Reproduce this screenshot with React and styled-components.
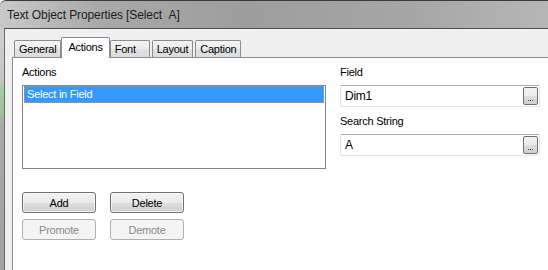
import styled, { createGlobalStyle, css } from 'styled-components';

const GlobalStyle = createGlobalStyle`
  html, body {
    margin: 0;
    padding: 0;
    width: 548px;
    height: 270px;
    overflow: hidden;
    background: #f0f0f0;
  }
  body {
    font-family: "Liberation Sans", Arial, sans-serif;
    font-size: 11px;
    letter-spacing: -0.25px;
    color: #000;
  }
`;

const Window = styled.div`
  width: 548px;
  height: 270px;
  display: flex;
  flex-direction: column;
  overflow: hidden;
`;

const TitleBar = styled.div`
  height: 27px;
  border-top: 1px solid #3a3a3a;
  border-top-left-radius: 6px;
  background: linear-gradient(90deg, #c9c9c9 0%, #a9a9a9 18%, #9d9d9d 45%, #a6a6a6 75%, #b6b6b6 100%);
  display: flex;
  align-items: center;
  padding-left: 7px;
  font-size: 12px;
  letter-spacing: -0.1px;
  color: #1c1c1c;
  flex-shrink: 0;
`;

const Frame = styled.div`
  flex: 1;
  display: flex;
  min-height: 0;
`;

const FrameEdge = styled.div`
  width: 4px;
  flex-shrink: 0;
  background: linear-gradient(180deg, #cfcfcf 0px, #c6c6c6 50px, #a8c8a6 62px, #9cc29a 85px, #a9a9a9 98px, #a2a2a2 100%);
`;

const Body = styled.div`
  flex: 1;
  border-top: 1px solid #4e4e4e;
  border-left: 1px solid #6a6a6a;
  background: #f0f0f0;
  padding: 8px 0 0 7px;
  display: flex;
  flex-direction: column;
  min-width: 0;
`;

const TabStrip = styled.div`
  height: 20px;
  display: flex;
  align-items: flex-end;
  gap: 2px;
  padding-left: 2px;
`;

const Tab = styled.div`
  box-sizing: border-box;
  height: 17px;
  min-width: 40px;
  padding: 0 4px;
  border: 1px solid #898c95;
  border-bottom: none;
  border-radius: 2px 2px 0 0;
  background: linear-gradient(180deg, #f4f4f4 0%, #ececec 50%, #e2e2e2 51%, #dcdcdc 100%);
  display: flex;
  align-items: center;
  white-space: nowrap;
  ${({ $active }) =>
    $active &&
    css`
      height: 21px;
      margin: 0 -2px -1px;
      padding: 0 6px 2px;
      background: #fff;
      position: relative;
      z-index: 1;
    `}
`;

const Panel = styled.div`
  flex: 1;
  background: #fff;
  border: 1px solid #898c95;
  border-right: none;
  border-bottom: none;
  padding: 7px 0 0 9px;
  display: flex;
  gap: 14px;
`;

const Column = styled.div`
  width: ${({ $width }) => $width}px;
  display: flex;
  flex-direction: column;
`;

const Label = styled.div`
  height: 14px;
  line-height: 14px;
  margin-bottom: 6px;
`;

const ListBox = styled.div`
  box-sizing: border-box;
  height: 84px;
  border: 1px solid #828790;
  padding: 0 1px;
`;

const ListItem = styled.div`
  height: 17px;
  box-sizing: border-box;
  line-height: 15px;
  padding-left: 2px;
  ${({ $selected }) =>
    $selected &&
    css`
      background: #3399ff;
      color: #fff;
      border: 1px dotted #d8903a;
    `}
`;

const ButtonRow = styled.div`
  display: flex;
  gap: 14px;
  margin-top: ${({ $top }) => $top}px;
`;

const Button = styled.button`
  box-sizing: border-box;
  width: 74px;
  height: 21px;
  padding: 0;
  font: inherit;
  letter-spacing: inherit;
  color: #000;
  border: 1px solid #707070;
  border-radius: 3px;
  background: linear-gradient(180deg, #f2f2f2 0%, #ebebeb 50%, #dddddd 51%, #cfcfcf 100%);
  box-shadow: inset 0 0 0 1px rgba(255, 255, 255, 0.7);
  &:disabled {
    color: #8a8a8a;
    border-color: #adb2b5;
    background: #f4f4f4;
    box-shadow: none;
  }
`;

const TextBox = styled.div`
  box-sizing: border-box;
  height: 22px;
  border: 1px solid #e2e3ea;
  border-top-color: #abadb3;
  border-radius: 2px;
  display: flex;
  align-items: center;
  padding: 0 1px 0 4px;
  margin-bottom: 7px;
  font-size: 12px;
`;

const Value = styled.span`
  flex: 1;
`;

const BrowseButton = styled.div`
  box-sizing: border-box;
  width: 15px;
  height: 18px;
  border: 1px solid #707070;
  border-radius: 2px;
  background: linear-gradient(180deg, #f2f2f2 0%, #ebebeb 50%, #dddddd 51%, #cfcfcf 100%);
  display: flex;
  align-items: flex-end;
  justify-content: center;
  padding-bottom: 3px;
  gap: 1px;
`;

const Dot = styled.span`
  width: 1px;
  height: 1px;
  background: ${({ $color }) => $color};
`;

function Browse() {
  return (
    <BrowseButton>
      <Dot $color="#3a3ad0" />
      <Dot $color="#202020" />
      <Dot $color="#c03030" />
    </BrowseButton>
  );
}

const tabs = ['General', 'Actions', 'Font', 'Layout', 'Caption'];

export default function App() {
  return (
    <Window>
      <GlobalStyle />
      <TitleBar>Text Object Properties [Select&nbsp;&nbsp;A]</TitleBar>
      <Frame>
        <FrameEdge />
        <Body>
          <TabStrip>
            {tabs.map((t) => (
              <Tab key={t} $active={t === 'Actions'}>
                {t}
              </Tab>
            ))}
          </TabStrip>
          <Panel>
            <Column $width={304}>
              <Label>Actions</Label>
              <ListBox>
                <ListItem $selected>Select in Field</ListItem>
              </ListBox>
              <ButtonRow $top={23}>
                <Button>Add</Button>
                <Button>Delete</Button>
              </ButtonRow>
              <ButtonRow $top={6}>
                <Button disabled>Promote</Button>
                <Button disabled>Demote</Button>
              </ButtonRow>
            </Column>
            <Column $width={200}>
              <Label>Field</Label>
              <TextBox>
                <Value>Dim1</Value>
                <Browse />
              </TextBox>
              <Label>Search String</Label>
              <TextBox>
                <Value>A</Value>
                <Browse />
              </TextBox>
            </Column>
          </Panel>
        </Body>
      </Frame>
    </Window>
  );
}
